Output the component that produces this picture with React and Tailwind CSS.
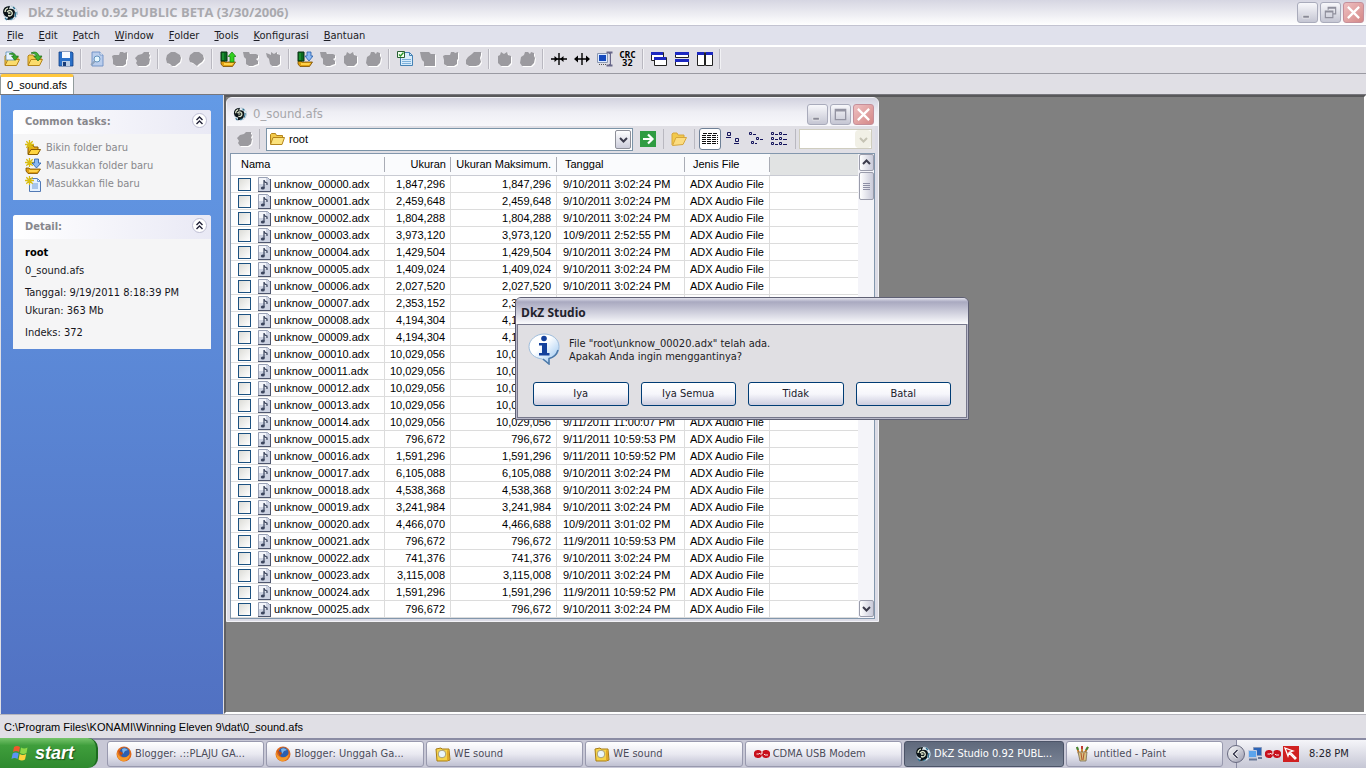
import React from "react";

const DATE = "9/10/2011 3:02:24 PM";

const FILES = [
  ["1,847,296", "1,847,296", DATE],
  ["2,459,648", "2,459,648", DATE],
  ["1,804,288", "1,804,288", DATE],
  ["3,973,120", "3,973,120", "10/9/2011 2:52:55 PM"],
  ["1,429,504", "1,429,504", DATE],
  ["1,409,024", "1,409,024", DATE],
  ["2,027,520", "2,027,520", DATE],
  ["2,353,152", "2,353,152", DATE],
  ["4,194,304", "4,194,304", DATE],
  ["4,194,304", "4,194,304", DATE],
  ["10,029,056", "10,029,056", "9/11/2011 11:00:07 PM"],
  ["10,029,056", "10,029,056", "9/11/2011 11:00:07 PM"],
  ["10,029,056", "10,029,056", "9/11/2011 11:00:07 PM"],
  ["10,029,056", "10,029,056", "9/11/2011 11:00:07 PM"],
  ["10,029,056", "10,029,056", "9/11/2011 11:00:07 PM"],
  ["796,672", "796,672", "9/11/2011 10:59:53 PM"],
  ["1,591,296", "1,591,296", "9/11/2011 10:59:52 PM"],
  ["6,105,088", "6,105,088", DATE],
  ["4,538,368", "4,538,368", DATE],
  ["3,241,984", "3,241,984", DATE],
  ["4,466,070", "4,466,688", "10/9/2011 3:01:02 PM"],
  ["796,672", "796,672", "11/9/2011 10:59:53 PM"],
  ["741,376", "741,376", DATE],
  ["3,115,008", "3,115,008", DATE],
  ["1,591,296", "1,591,296", "11/9/2011 10:59:52 PM"],
  ["796,672", "796,672", DATE],
].map(([size, max, date], i) => ({
  name: `unknow_${String(i).padStart(5, "0")}.adx`,
  size,
  max,
  date,
}));

const MENU = ["File", "Edit", "Patch", "Window", "Folder", "Tools", "Konfigurasi", "Bantuan"];

function Svg({ children, className = "h-4 w-4", box = "0 0 16 16" }) {
  return (
    <svg viewBox={box} className={`shrink-0 ${className}`} aria-hidden="true">
      {children}
    </svg>
  );
}

function AppLogo({ className }) {
  return (
    <Svg className={className}>
      <circle cx="8.500" cy="8" r="7" fill="#dfeaf0" stroke="#9fb8c8" strokeWidth=".8" strokeDasharray="2 1" />
      <path d="M1 7Q1 1 8 1L7 4Q12 3 13 7L12 12Q10 15 5 15L6 12Q2 12 1 7z" fill="#0c1418" />
      <path d="M3 7Q3 4 6 3M5 7Q8 4 10 7Q11 10 8 11L6 10.500M6 8h2.500" fill="none" stroke="#e4ecd0" strokeWidth="1.300" />
      <path d="M11 2l2 2M14 7l-1 5M3 13l2 2M8 14.500l3-1" stroke="#2c7090" strokeWidth="1.300" />
    </Svg>
  );
}

const yellowFolder = (
  <>
    <path d="M1 14V5l1-1h4l1 2h7v3" fill="#f2c94a" stroke="#b4841a" />
    <path d="M1 14.500L4 8.500h11.500L12.500 14.500z" fill="#fbdc6c" stroke="#b4841a" />
  </>
);

const goldTray = (
  <>
    <path d="M1 10h3l1 1h10.500l-3 4.500H3L1 13z" fill="#e0a010" stroke="#7a4e00" strokeWidth=".8" />
    <path d="M4 12h10l-2 2H4z" fill="#ffd24a" />
  </>
);

const sparkle = (
  <path d="M4.500 0v9M0 4.500h9M1.300 1.300l6.400 6.400M7.700 1.300l-6.400 6.400" stroke="#d9bd10" strokeWidth="1.300" />
);

const ICONS = {
  openFile: (
    <>
      {yellowFolder}
      <path d="M2 1h6l2 2v6H2z" fill="#e9f4ff" stroke="#5c8fb8" strokeWidth=".8" />
      <path d="M5 3Q10 0 12 5h2.500L11 9.500 7.500 5H10Q9 3 5 3z" fill="#35a52c" stroke="#186c14" strokeWidth=".6" />
    </>
  ),
  openFolder: (
    <>
      {yellowFolder}
      <path d="M4 2Q10-1 12 5h3L11 10 7 5h2.500Q8 2 4 2z" fill="#43b535" stroke="#186c14" strokeWidth=".7" />
    </>
  ),
  save: (
    <>
      <path d="M1 1h13l1 1v13H1z" fill="#2a70c8" stroke="#123f86" strokeWidth=".8" />
      <path d="M4 1h8v6H4z" fill="#f7faff" />
      <path d="M4 10h8v5H4z" fill="#b9cce4" />
      <path d="M5 11h3v4H5z" fill="#183c78" />
    </>
  ),
  preview: (
    <>
      <path d="M3 1h8l3 3v11H3z" fill="#b9cdec" stroke="#6c8fc4" strokeWidth=".9" />
      <path d="M11 1v3h3" fill="#fff" stroke="#6c8fc4" strokeWidth=".8" />
      <circle cx="8" cy="8" r="3" fill="#e6f8ff" stroke="#6292bd" />
      <path d="M6 10l-4 4" stroke="#8ea4bd" strokeWidth="1.800" />
    </>
  ),
  importUp: (
    <>
      {goldTray}
      <path d="M1 1h6v9H1z" fill="#0a6820" stroke="#083010" />
      <path d="M3 2v7" stroke="#2cb03c" />
      <path d="M12 1l4 4.500h-2V11h-4V5.500H8z" fill="#32d020" stroke="#11800c" strokeWidth=".7" />
    </>
  ),
  exportDown: (
    <>
      {goldTray}
      <path d="M1 1h6v9H1z" fill="#0a6820" stroke="#083010" />
      <path d="M3 2v7" stroke="#2cb03c" />
      <path d="M10 1h4v4h2l-4 5-4-5h2z" fill="#8ab8f4" stroke="#235aa8" strokeWidth=".8" />
    </>
  ),
  checkDoc: (
    <>
      <path d="M3.500 1.500h9l3 3v10h-12z" fill="#d7ecfb" stroke="#4682b4" />
      <path d="M12.500 1.500v3h3" fill="none" stroke="#4682b4" />
      <path d="M5 8.500h9M5 10.500h9M5 12.500h9" stroke="#7db1db" />
      <path d="M.5.500h7v6h-7z" fill="#f4fff0" stroke="#285f34" />
      <path d="M2 3.500l1.500 1.500 3-3.500" fill="none" stroke="#27962a" strokeWidth="1.300" />
    </>
  ),
  arrowsIn: (
    <>
      <path d="M0 8h16M8 2v12" stroke="#000" strokeWidth="1.400" />
      <path d="M3.500 5v6L7 8zM12.500 5v6L9 8z" fill="#000" />
    </>
  ),
  arrowsOut: (
    <>
      <path d="M1 8h14M8 2v12" stroke="#000" strokeWidth="1.400" />
      <path d="M4 4.500v7L0 8zM12 4.500v7L16 8z" fill="#000" />
    </>
  ),
  resize: (
    <>
      <path d="M.5 2.500h10v9H.5z" fill="#dceaff" stroke="#8c98b0" />
      <path d="M2 4h7v6H2z" fill="#1549bd" />
      <path d="M2 13.500h8" stroke="#555" strokeDasharray="1 1" />
      <path d="M9.500 1.500h6M9.500 14.500h6M13 1v14" stroke="#68688a" strokeWidth="2" />
      <path d="M12.500 3v10" stroke="#c7c7dc" />
    </>
  ),
  cascade: (
    <>
      <path d="M.5 1.500h12v8H.5z" fill="#fff" stroke="#222" />
      <path d="M0 1h12v3H0z" fill="#1c28c0" />
      <path d="M3.500 6.500h12v8h-12z" fill="#fff" stroke="#222" />
      <path d="M3 6h12v3H3z" fill="#1c28c0" />
    </>
  ),
  tileH: (
    <>
      <path d="M1.500 1.500h13v5h-13zM1.500 8.500h13v6h-13z" fill="#fff" stroke="#222" />
      <path d="M1 1h14v3H1zM1 8h14v3H1z" fill="#1c28c0" />
    </>
  ),
  tileV: (
    <>
      <path d="M.5 1.500h7v13h-7zM8.500 1.500h7v13h-7z" fill="#fff" stroke="#222" />
      <path d="M0 1h7v3H0zM9 1h7v3H9z" fill="#1c28c0" />
    </>
  ),
  newFolder: (
    <>
      <path d="M3 5h5l1 2h4v7H3z" fill="#e8ac18" stroke="#8a5c00" />
      <path d="M3 14.500l3-5h9.500l-3 5z" fill="#ffd542" stroke="#8a5c00" />
      {sparkle}
    </>
  ),
  addFolder: (
    <>
      {goldTray}
      {sparkle}
      <path d="M9.500 1h4v4h2.500l-4.500 5L7 5h2.500z" fill="#8ab8f4" stroke="#235aa8" strokeWidth=".8" />
    </>
  ),
  addFile: (
    <>
      <path d="M4.500 2.500h8l3 3v10h-11z" fill="#e4f1ff" stroke="#5279b4" />
      <path d="M12.500 2.500v3h3M7 8h6M7 10h6M7 12h6" fill="none" stroke="#6d9ad8" />
      {sparkle}
    </>
  ),
};

// Disabled toolbar glyphs are flat silhouettes with a white embossed edge.
const BLOBS = {
  share: "M0 5l2-1h5l1-3h3l1 1 3-1v7l-1 1v4l-3 2H4l-3-2V9z",
  sharp: "M0 7l3-3 4-1 2-2h5v2l1 1-1 3 1 1-1 5-3 2H3l-2-3 1-2z",
  hex: "M1 4l4-3h4l5 3 1 3-1 4-5 4H6l-2-2-3-1-1-4z",
  hex2: "M1 4l4-3h5l4 3 1 4-2 3-3 2-2 2-4-3-3-1-1-3z",
  claw: "M0 1h6l1 2h6l2 1v3l-2 1 2 2v3l-3 1-2 1H6l-3-2V8L1 6z",
  crown: "M0 2l3 1 2 1V1l3 2 3-2v2l3 1v9l-3 2H6l-2-2-1-5-2-2z",
  box: "M0 1h9l2 2h4v12H4v-4L2 9 1 6z",
  pot: "M1 5l2-1 1-3 3 2 3-2 1 3 3 1v7l-3 3H4l-3-3z",
  bag: "M1 6l3-2 1-3h3l2 2 1-2 3 1v3l1 2-1 5-3 3H2l-2-3z",
  round: "M0 9l2-3 4-3 2-2h7v3l-1 3 1 4-2 3-3 1H3l-3-2z",
};

function Blob({ shape }) {
  return (
    <Svg>
      <path d={BLOBS[shape]} fill="#fff" transform="translate(1 1)" />
      <path d={BLOBS[shape]} fill="#9b9a9f" />
    </Svg>
  );
}

const TOOLBAR = [
  ["openFile", "openFolder"],
  ["save"],
  ["preview", "@share", "@sharp"],
  ["@hex", "@hex2"],
  ["importUp", "@claw", "@crown"],
  ["exportDown", "@claw", "@pot", "@bag"],
  ["checkDoc", "@box", "@share", "@round"],
  ["@pot", "@bag"],
  ["arrowsIn", "arrowsOut", "resize", "crc"],
  ["cascade", "tileH", "tileV"],
];

function ToolIcon({ id }) {
  if (id[0] === "@") return <Blob shape={id.slice(1)} />;
  if (id === "crc") {
    return (
      <span className="block text-center font-['DejaVu_Sans_Mono',monospace] text-[9px] leading-[8px] font-bold text-black">
        CRC
        <br />
        32
      </span>
    );
  }
  return <Svg>{ICONS[id]}</Svg>;
}

function Toolbar() {
  return (
    <div className="flex h-[27px] shrink-0 items-center border-b border-[#9a9aa2] bg-[#e0dfe5] pb-[3px]">
      {TOOLBAR.map((group, g) => (
        <React.Fragment key={g}>
          {group.map((id, i) => (
            <button
              key={i}
              type="button"
              aria-label={id.replace("@", "")}
              disabled={id[0] === "@"}
              className="flex h-[22px] w-[23px] items-center justify-center"
            >
              <ToolIcon id={id} />
            </button>
          ))}
          <span className="mx-[3px] h-5 w-0.5 border-l border-[#b9b8c0] bg-[#f2f2f5]" />
        </React.Fragment>
      ))}
    </div>
  );
}

function WindowButtons({ restore }) {
  const base =
    "flex h-[21px] w-[21px] items-center justify-center rounded-[3px] border border-[#a9abbb] bg-linear-to-b from-[#f8f8fb] to-[#c5c6d3]";
  return (
    <div className="flex gap-0.5">
      <button type="button" aria-label="Minimize" className={base}>
        <Svg className="h-[15px] w-[15px]">
          <path d="M3 11h7v3H3z" fill="#8b8b98" stroke="#fff" strokeWidth=".6" />
        </Svg>
      </button>
      <button type="button" aria-label={restore ? "Restore" : "Maximize"} className={base}>
        <Svg className="h-[15px] w-[15px]">
          {restore ? (
            <path d="M5.500 5V2.500h8v7H11M2.500 6.500h8v7h-8zM2 7.500h9M5 3.500h9" fill="none" stroke="#8f8f9c" strokeWidth="1.200" />
          ) : (
            <path d="M2.500 2.500h11v11h-11zM2 4h12" fill="none" stroke="#9494a2" strokeWidth="1.400" />
          )}
        </Svg>
      </button>
      <button
        type="button"
        aria-label="Close"
        className="flex h-[21px] w-[21px] items-center justify-center rounded-[3px] border border-[#c58f9a] bg-linear-to-br from-[#eebfc0] to-[#d48888]"
      >
        <Svg className="h-[15px] w-[15px]">
          <path d="M2 2l12 12M14 2L2 14" stroke="#fff" strokeWidth="2.400" />
        </Svg>
      </button>
    </div>
  );
}

function TaskPanel({ title, children }) {
  return (
    <section className="overflow-hidden rounded-t-[3px] bg-[#f5f5f6]">
      <header className="flex h-6 items-center justify-between bg-linear-to-r from-white to-[#e9e9f5] pr-1 pl-3">
        <h2 className="pt-px text-[11px] font-bold text-[#87878c]">{title}</h2>
        <button
          type="button"
          aria-label={`Collapse ${title}`}
          className="mb-[3px] flex h-[15px] w-[15px] items-center justify-center rounded-full border border-[#bcbcd2] bg-white"
        >
          <Svg className="h-[11px] w-[11px]" box="0 0 11 11">
            <path d="M2.500 5l3-3 3 3M2.500 9l3-3 3 3" fill="none" stroke="#222238" strokeWidth="1.400" />
          </Svg>
        </button>
      </header>
      {children}
    </section>
  );
}

function Sidebar() {
  const tasks = [
    ["newFolder", "Bikin folder baru"],
    ["addFolder", "Masukkan folder baru"],
    ["addFile", "Masukkan file baru"],
  ];
  return (
    <aside className="flex w-[222px] shrink-0 flex-col gap-[15px] bg-linear-to-b from-[#639ae6] to-[#5171c2] px-3 pt-[15px]">
      <TaskPanel title="Common tasks:">
        <ul className="pt-[5px] pb-[7px] pl-3">
          {tasks.map(([icon, label]) => (
            <li key={label} className="h-[18px]">
              <a href="#" className="flex items-center gap-[5px] leading-[18px] text-[#88888c]">
                <Svg>{ICONS[icon]}</Svg>
                {label}
              </a>
            </li>
          ))}
        </ul>
      </TaskPanel>
      <TaskPanel title="Detail:">
        <div className="pt-[5px] pb-[7px] pl-3 leading-[18px] text-[#15151c]">
          <p className="font-bold text-black">root</p>
          <p>0_sound.afs</p>
          <p className="mt-1">Tanggal: 9/19/2011 8:18:39 PM</p>
          <p>Ukuran: 363 Mb</p>
          <p className="mt-1">Indeks: 372</p>
        </div>
      </TaskPanel>
    </aside>
  );
}

function Chevron({ up, color = "#3c3c4c" }) {
  return (
    <Svg className="h-[9px] w-[9px]" box="0 0 9 9">
      <path d={up ? "M1 6l3.500-3.500L8 6" : "M1 3l3.500 3.500L8 3"} fill="none" stroke={color} strokeWidth="2" />
    </Svg>
  );
}

function ViewIcon({ d }) {
  return (
    <Svg>
      <path d={d} fill="none" stroke="#14145c" />
    </Svg>
  );
}

function ExplorerBar() {
  return (
    <div className="flex h-[27px] shrink-0 items-center bg-[#e0dfe5] pr-[3px] pb-px">
      <button type="button" aria-label="Up" disabled className="flex w-[29px] justify-center">
        <Blob shape="sharp" />
      </button>
      <span className="mr-1.5 h-5 w-px bg-[#b9b8c0]" />
      <div className="flex h-[23px] min-w-0 flex-1 items-center border border-[#7b94a8] bg-white pr-px pl-0.5">
        <Svg>
          <path d="M1.500 13V3.500l1-1h4l1 2h6v3" fill="#f2c94a" stroke="#b4841a" />
          <path d="M1.500 13.500L4 6.500h11.500L13 13.500z" fill="#fbe27c" stroke="#b4841a" />
        </Svg>
        <select
          aria-label="Path"
          className="min-w-0 flex-1 appearance-none bg-transparent pl-1 font-['Liberation_Sans',sans-serif] text-[11px] text-black"
        >
          <option>root</option>
        </select>
        <span className="flex h-[19px] w-4 items-center justify-center rounded-xs border border-[#8e9099] bg-linear-to-b from-white to-[#cccddb]">
          <Chevron />
        </span>
      </div>
      <button type="button" aria-label="Go" className="ml-[7px]">
        <Svg>
          <path d="M0 0h16v16H0z" fill="#2f9c42" />
          <path d="M3 8h9M8 3.500L12.500 8 8 12.500" fill="none" stroke="#fff" strokeWidth="2.200" />
        </Svg>
      </button>
      <span className="mx-[7px] h-5 w-px bg-[#b9b8c0]" />
      <button type="button" aria-label="Open">
        <Svg>
          <path d="M1 14V3l1-1h4l1 2h6v3" fill="#f2c94a" stroke="#d6a63c" />
          <path d="M1.500 14.500L5 6.500h10.500L12 13.500z" fill="#fbdc80" stroke="#d6a63c" />
        </Svg>
      </button>
      <span className="mr-1 ml-[7px] h-5 w-px bg-[#b9b8c0]" />
      <button
        type="button"
        aria-label="Details"
        className="flex h-[22px] w-[22px] items-center justify-center rounded-[3px] border border-[#6d7f96] bg-white"
      >
        <Svg>
          <path d="M1 2.500h14M0 4.500h16M0 6.500h16M0 8.500h16M0 10.500h16M0 12.500h16" stroke="#111" strokeDasharray="4 1" />
        </Svg>
      </button>
      <div className="flex gap-[7px] px-1">
        <button type="button" aria-label="Large icons">
          <ViewIcon d="M2.500 1.500h3v3h-3zM1 6.500h5M10.500 7.500h3v3h-3zM9 12.500h5" />
        </button>
        <button type="button" aria-label="Small icons">
          <ViewIcon d="M1.500 1.500h2v2h-2zM5 3.500h3M8.500 6.500h2v2h-2zM12 8.500h3M3.500 10.500h2v2h-2zM7 12.500h2" />
        </button>
        <button type="button" aria-label="List">
          <ViewIcon d="M.5 1.500h2v2h-2zM4 3.500h3M8.500 1.500h2v2h-2zM12 3.500h4M.5 6.500h2v2h-2zM4 8.500h3M8.500 6.500h2v2h-2zM12 8.500h4M.5 11.500h2v2h-2zM4 13.500h3M8.500 11.500h2v2h-2zM12 13.500h4" />
        </button>
      </div>
      <span className="ml-1 h-5 w-px bg-[#b9b8c0]" />
      <div className="ml-[3px] flex h-5 w-[73px] items-center border border-[#cfcdbf] bg-white">
        <select aria-label="Filter" disabled className="min-w-0 flex-1 appearance-none" />
        <span className="flex h-[18px] w-4 items-center justify-center rounded-sm bg-[#f1f0e6]">
          <Chevron color="#c5c3b4" />
        </span>
      </div>
    </div>
  );
}

function FileTable() {
  const th = "h-[22px] border-b border-[#c9cbd3] bg-[#fafbfd] p-0 font-normal";
  const tick = "flex h-[15px] items-center border-r border-[#a9acb5]";
  const td = "h-[17px] border-r border-b border-[#dcdcdc] p-0 leading-4";
  return (
    <table className="h-fit min-w-0 flex-1 table-fixed border-separate border-spacing-0 font-['Liberation_Sans',sans-serif] text-[11px] whitespace-nowrap text-black">
      <colgroup>
        <col className="w-[154px]" />
        <col className="w-[66px]" />
        <col className="w-[106px]" />
        <col className="w-[128px]" />
        <col className="w-[85px]" />
        <col />
      </colgroup>
      <thead>
        <tr>
          <th className={th}>
            <div className={`${tick} pl-2.5`}>Nama</div>
          </th>
          <th className={th}>
            <div className={`${tick} justify-end pr-1`}>Ukuran</div>
          </th>
          <th className={th}>
            <div className={`${tick} justify-end pr-[5px]`}>Ukuran Maksimum.</div>
          </th>
          <th className={th}>
            <div className={`${tick} pl-2`}>Tanggal</div>
          </th>
          <th className={th}>
            <div className={`${tick} pl-2`}>Jenis File</div>
          </th>
          <th className="border-b border-[#c9cbd3] bg-[#e1e3e3] p-0" />
        </tr>
      </thead>
      <tbody>
        {FILES.map((f) => (
          <tr key={f.name}>
            <td className={td}>
              <label className="flex h-4 items-center pl-[7px]">
                <input
                  type="checkbox"
                  className="h-[13px] w-[13px] appearance-none border border-[#1c5180] bg-linear-to-br from-[#dcdcd7] to-white"
                />
                <Svg className="ml-[7px] h-[15px] w-[13px]" box="0 0 13 15">
                  <path d="M.5.500h9l3 3v11H.5z" fill="#cdd3e2" stroke="#98a0b4" />
                  <path d="M1 1h7v6H1z" fill="#f3f5fa" />
                  <path d="M12.500 2v13M0 14.500h13" stroke="#4e566e" />
                  <path d="M6 11V3q0 2 3 3v2" fill="none" stroke="#3c465e" strokeWidth="1.200" />
                  <ellipse cx="4.800" cy="11" rx="2" ry="1.500" fill="#3c465e" />
                </Svg>
                <span className="ml-[3px]">{f.name}</span>
              </label>
            </td>
            <td className={`${td} pr-[5px] text-right`}>{f.size}</td>
            <td className={`${td} pr-[5px] text-right`}>{f.max}</td>
            <td className={`${td} pl-1.5`}>{f.date}</td>
            <td className={`${td} pl-[5px]`}>ADX Audio File</td>
            <td className="border-b border-[#dcdcdc] p-0" />
          </tr>
        ))}
      </tbody>
    </table>
  );
}

function ScrollBar() {
  const btn =
    "flex w-[15px] items-center justify-center rounded-xs border border-[#9a9cab] bg-linear-to-r from-white to-[#c9cad9]";
  return (
    <div className="flex w-4 shrink-0 flex-col items-center bg-[#f4f4f9] pb-px">
      <button type="button" aria-label="Scroll up" className={`${btn} h-[17px]`}>
        <Chevron up />
      </button>
      <div className={`${btn} mt-px h-7`}>
        <Svg className="h-[9px] w-[7px]" box="0 0 7 9">
          <path d="M0 1.500h7M0 3.500h7M0 5.500h7M0 7.500h7" stroke="#8d8fa5" />
        </Svg>
      </div>
      <button type="button" aria-label="Scroll down" className={`${btn} mt-auto h-[17px]`}>
        <Chevron />
      </button>
    </div>
  );
}

function ChildWindow() {
  return (
    <section className="absolute top-0 left-0 flex w-[653px] flex-col rounded-t-[6px] border border-[#f3f3f7] bg-[#dcdce6] px-[3px] pb-0.5">
      <header className="-mx-[3px] flex h-7 shrink-0 items-center rounded-t-[5px] bg-linear-to-b from-[#d2d2df] via-[#eeeef4] to-[#f8f8fb] pt-1 pr-1 pl-1.5">
        <AppLogo className="h-3.5 w-3.5" />
        <h2 className="ml-1.5 flex-1 font-['DejaVu_Sans_Condensed','DejaVu_Sans',sans-serif] text-[13px] text-[#a6a6aa]">
          0_sound.afs
        </h2>
        <WindowButtons />
      </header>
      <ExplorerBar />
      <div className="flex border border-[#8397ad] bg-white">
        <FileTable />
        <ScrollBar />
      </div>
    </section>
  );
}

function Dialog() {
  return (
    <section
      role="dialog"
      aria-labelledby="dlg-title"
      className="absolute top-[297px] left-[515px] w-[454px] rounded-t-[6px] border border-[#5f6074] bg-[#b9b9c9] px-px pb-px"
    >
      <header className="-mx-px flex h-[26px] items-center rounded-t-[5px] bg-linear-to-b from-[#e4e4ee] via-[#a9a9c0] via-15% to-[#fbfbfd] pl-[5px]">
        <h2 id="dlg-title" className="pt-1 font-['Open_Sans',sans-serif] text-[12px] font-bold text-[#22222c]">
          DkZ Studio
        </h2>
      </header>
      <div className="border border-[#77788c] bg-[#e0dfe3] px-[15px] pt-2 pb-[11px]">
        <div className="flex items-center">
          <Svg className="-ml-[5px] h-8 w-8" box="0 0 32 32">
            <defs>
              <linearGradient id="bubble" x1="0" y1="0" x2="1" y2="1">
                <stop offset=".4" stopColor="#fff" />
                <stop offset="1" stopColor="#8fc0f0" />
              </linearGradient>
            </defs>
            <path d="M16 1C24 1 31 6 31 13.500S27 24 21 25.500L21 31L14 26C6 25 1 20 1 13.500S8 1 16 1z" fill="url(#bubble)" stroke="#9dbcdc" />
            <path d="M30 17Q28 24 21 25.500V31L15 26" fill="none" stroke="#4c78a8" strokeWidth="1.500" />
            <circle cx="16" cy="5.500" r="2.800" fill="#13409c" />
            <path d="M11 10h8v10h2.500v2.500H11V20h3v-7.500h-3z" fill="#13409c" />
          </Svg>
          <p className="ml-[9px] pt-px leading-[13px]">
            File "root\unknow_00020.adx" telah ada.
            <br />
            Apakah Anda ingin menggantinya?
          </p>
        </div>
        <div className="mt-[17px] grid grid-cols-4 gap-3">
          {["Iya", "Iya Semua", "Tidak", "Batal"].map((b) => (
            <button
              key={b}
              type="button"
              className="h-6 rounded-[3px] border border-[#003c74] bg-linear-to-b from-white via-[#f6f6fb] to-[#cdcddf] text-[#20202a]"
            >
              {b}
            </button>
          ))}
        </div>
      </div>
    </section>
  );
}

function Firefox() {
  return (
    <Svg>
      <circle cx="8" cy="8" r="7.500" fill="#e0691c" />
      <circle cx="8.500" cy="6.500" r="5" fill="#2c5fb0" />
      <path d="M6 3q3-2 6 1l-3 1-2 3z" fill="#7db6ea" />
      <path d="M1 4q0 5 4 7 5 2 9-3-1 7-7 7.500Q0 14 1 4z" fill="#f39a2c" />
      <path d="M2 4l5 3-2 3z" fill="#c4480c" />
    </Svg>
  );
}

function SearchFolder() {
  return (
    <Svg>
      <path d="M1 3l5-1 1 1h7l1 11-3 1H2z" fill="#f6d44a" stroke="#a87c14" />
      <circle cx="7" cy="8" r="3.800" fill="#eaf6fb" stroke="#a8a078" />
      <path d="M12 4l2 1v9l-2 1z" fill="#e0a828" />
    </Svg>
  );
}

function Smartfren() {
  return (
    <Svg>
      <path d="M0 8a4 3.500 0 0 1 8-1 4 3.500 0 0 1 8 1 4 3.500 0 0 1-8 1 4 3.500 0 0 1-8-1z" fill="#c8101c" />
      <path d="M2.500 8h2.500l1-1M7 9V7h2M10 8l1 1h3" fill="none" stroke="#fff" strokeWidth=".9" />
    </Svg>
  );
}

function PaintCup() {
  return (
    <Svg>
      <path d="M4 8L2 1M7 8V0M9 8l4-7" stroke="#c87820" strokeWidth="1.800" />
      <path d="M2 1l1 3M13 1l-2 3" stroke="#3c8838" strokeWidth="2" />
      <path d="M7 0v3" stroke="#c03c30" strokeWidth="2" />
      <path d="M3 6h9l-1 9H5z" fill="#d8c080" stroke="#7c6c50" strokeWidth=".8" />
      <path d="M6 7l1 7M9 7l-1 7" stroke="#b05830" />
    </Svg>
  );
}

const WINDOWS = [
  { icon: <Firefox />, label: "Blogger: .::PLAJU GA..." },
  { icon: <Firefox />, label: "Blogger: Unggah Ga..." },
  { icon: <SearchFolder />, label: "WE sound" },
  { icon: <SearchFolder />, label: "WE sound" },
  { icon: <Smartfren />, label: "CDMA USB Modem" },
  { icon: <AppLogo />, label: "DkZ Studio 0.92 PUBL...", active: true },
  { icon: <PaintCup />, label: "untitled - Paint" },
];

function Taskbar() {
  return (
    <footer className="flex h-[30px] shrink-0 border-t-2 border-[#8a8ba3] bg-[#c8c8d6]">
      <button
        type="button"
        className="-mt-0.5 flex w-[98px] items-center gap-1.5 rounded-r-[10px] border-r-2 border-[#1c6b1e] bg-linear-to-b from-[#75c46b] via-[#3f9e3c] via-25% to-[#2f8a2f] pl-[11px]"
      >
        <Svg className="h-[18px] w-[18px]" box="0 0 18 18">
          <path d="M3 3q3-2 6 0L8 8Q5 6 2 8z" fill="#f0582c" />
          <path d="M10 3.500q3 2 6.500 0L15.500 9q-3 2-6.500 0z" fill="#8cd848" />
          <path d="M1.700 9.500q3-2 6 0L6.500 15q-3-2-6 0z" fill="#5b94f4" />
          <path d="M8.700 10q3 2 6.500 0L14 15.500q-3 2-6.500 0z" fill="#fcd23c" />
        </Svg>
        <span className="font-['Liberation_Sans',sans-serif] text-[18px] leading-6 font-bold text-white italic [text-shadow:1px_1px_1px_#1d4f1d]">
          start
        </span>
      </button>
      <nav className="ml-[9px] flex min-w-0 flex-1 gap-0.5 py-px">
        {WINDOWS.map((w, i) => (
          <button
            key={i}
            type="button"
            className={
              w.active
                ? "flex min-w-0 flex-1 items-center gap-[3px] rounded-[3px] border border-[#4c5468] bg-linear-to-b from-[#5f697c] to-[#7a8496] pl-2.5 text-white"
                : "flex min-w-0 flex-1 items-center gap-[3px] rounded-[3px] border border-[#9899ae] bg-linear-to-b from-white via-[#e9e9f1] to-[#c0c1d2] pl-2 text-[#4c4c5a]"
            }
          >
            {w.icon}
            <span className="truncate">{w.label}</span>
          </button>
        ))}
      </nav>
      <div className="ml-[13px] flex w-[130px] items-center border-l border-[#8a8ba3] bg-linear-to-b from-[#f5f5f9] to-[#c6c7d5]">
        <button
          type="button"
          aria-label="Show hidden icons"
          className="-ml-2.5 flex h-[18px] w-[18px] items-center justify-center rounded-full border border-[#686a80] bg-linear-to-br from-white to-[#9c9db0]"
        >
          <Svg className="h-2.5 w-2.5" box="0 0 10 10">
            <path d="M6.500 1L2.500 5l4 4" fill="none" stroke="#fff" strokeWidth="3" />
            <path d="M6.500 1L2.500 5l4 4" fill="none" stroke="#33344a" strokeWidth="1.500" />
          </Svg>
        </button>
        <div className="ml-0.5 flex gap-0.5">
          <Svg>
            <path d="M6.500 1.500h8v8h-8z" fill="#2c64b8" stroke="#8898b8" />
            <path d="M1.500 4.500h8v7h-8z" fill="#5ca4ec" stroke="#c4cce0" />
            <path d="M2 13.500h8M11 12h4" stroke="#687898" strokeWidth="2" />
          </Svg>
          <Smartfren />
          <Svg>
            <path d="M0 0h16v16H0z" fill="#d02020" />
            <path d="M2 2l8 3-3 1 6 6-1 1-6-6-1 3z" fill="none" stroke="#fff" strokeWidth="1.300" />
          </Svg>
        </div>
        <time className="ml-2.5 text-[#22222c]">8:28 PM</time>
      </div>
    </footer>
  );
}

export default function App() {
  return (
    <div className="relative flex h-screen flex-col overflow-hidden bg-[#e0dfe5] font-['DejaVu_Sans_Condensed','DejaVu_Sans',sans-serif] text-[11px] text-[#1c1c24]">
      <header className="flex h-[26px] shrink-0 items-center border-b border-[#c3c3d1] bg-linear-to-b from-[#d6d6e2] to-white pr-0.5 pl-0.5">
        <AppLogo className="h-4 w-4" />
        <h1 className="ml-2.5 flex-1 pt-px font-['Open_Sans',sans-serif] text-[13px] font-bold text-[#a9a9ae]">
          DkZ Studio 0.92 PUBLIC BETA (3/30/2006)
        </h1>
        <WindowButtons restore />
      </header>
      <nav className="flex h-[21px] shrink-0 items-center gap-px border-b-2 border-white bg-[#e0e1ec] pt-0.5">
        {MENU.map((m) => (
          <button key={m} type="button" className="px-[7px]">
            <span className="underline">{m[0]}</span>
            {m.slice(1)}
          </button>
        ))}
      </nav>
      <Toolbar />
      <div className="flex h-[21px] shrink-0 items-end border-b border-[#77777c]">
        <button
          type="button"
          className="h-5 w-[74px] rounded-t-[3px] border-x border-t-3 border-x-[#919b9c] border-t-[#ffc73c] bg-white font-['Liberation_Sans',sans-serif] text-black"
        >
          0_sound.afs
        </button>
      </div>
      <main className="flex min-h-0 flex-1 pl-px">
        <Sidebar />
        <div className="relative ml-px min-w-0 flex-1 border-2 border-t-[#58585a] border-r-white border-b-white border-l-[#606062] bg-[#808080]">
          <ChildWindow />
        </div>
      </main>
      <div className="flex h-6 shrink-0 items-center border-t border-[#b5b5bd] pt-px pl-1 font-['Liberation_Sans',sans-serif] text-black">
        C:\Program Files\KONAMI\Winning Eleven 9\dat\0_sound.afs
      </div>
      <Taskbar />
      <Dialog />
    </div>
  );
}
